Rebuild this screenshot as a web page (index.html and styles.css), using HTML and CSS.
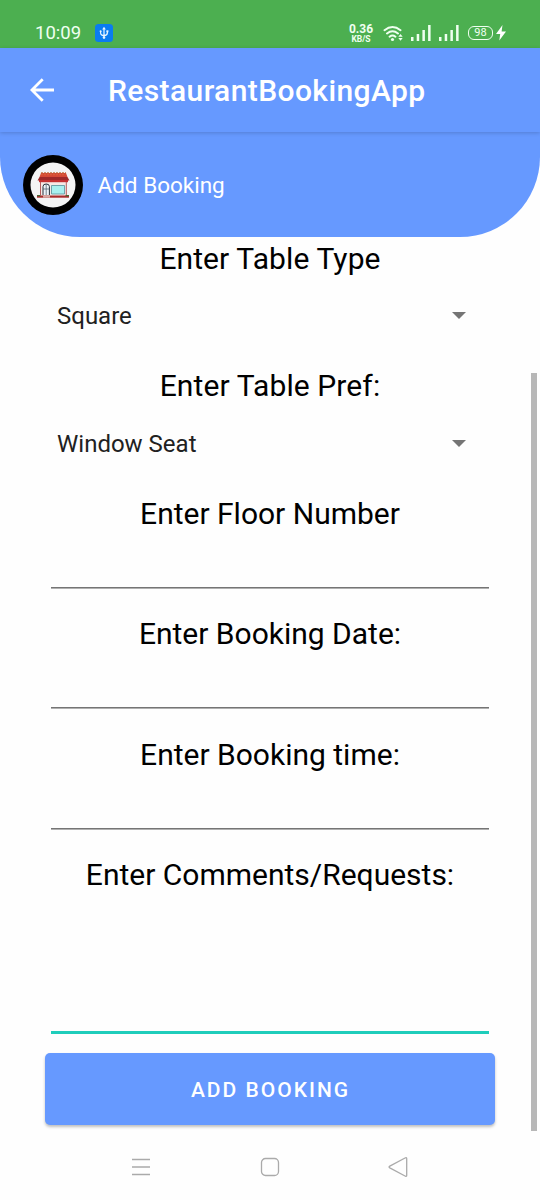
FILE: index.html
```html
<!DOCTYPE html>
<html lang="en">
<head>
<meta charset="utf-8">
<title>RestaurantBookingApp</title>
<link rel="stylesheet" href="styles.css">
</head>
<body>
<div class="screen">
  <div class="status">
    <span class="clock">10:09</span>
    <svg class="usb" width="18" height="18" viewBox="0 0 18 18">
      <rect width="18" height="18" rx="3.5" fill="#0a7cf0"/>
      <g fill="none" stroke="#e8f6ff" stroke-width="1.2"><path d="M9 4.5v10M5.6 7v1.8q0 2.6 3.4 2.9 3.4-.3 3.4-2.9V7"/></g>
      <path d="M9 2.8l1.8 2.6H7.2z" fill="#e8f6ff"/><circle cx="9" cy="13.5" r="1.3" fill="#e8f6ff"/><circle cx="5.6" cy="7.3" r="1" fill="#e8f6ff"/><path d="M11.4 6.3h2v2h-2z" fill="#e8f6ff"/>
    </svg>
    <div class="speed"><span class="rate">0.36</span><span class="unit">KB/S</span></div>
    <svg class="wifi" width="21" height="17" viewBox="0 0 21 17">
      <g fill="none" stroke="#effff0" stroke-width="2" stroke-linecap="round"><path d="M1.5 5.2q8-6.4 16 0M4 8.5q5.500-4.400 11 0M6.600 11.700q2.900-2.300 5.800 0"/></g>
      <circle cx="9.500" cy="14.500" r="1.600" fill="#effff0"/>
      <path d="M15.300 11.700l2.200-2.700 2.200 2.700zM15.300 13l2.200 2.700 2.200-2.700z" fill="#effff0"/>
    </svg>
    <svg class="signal" width="20" height="16" viewBox="0 0 20 16"><path d="M0 12h2.500v4H0zM5.700 9h2.500v7H5.700zM11.400 5h2.500v11h-2.500zM17.100 0h2.500v16h-2.500z" fill="#effff0"/></svg>
    <svg class="signal second" width="20" height="16" viewBox="0 0 20 16"><path d="M0 12h2.500v4H0zM5.700 9h2.500v7H5.700zM11.400 5h2.500v11h-2.500zM17.100 0h2.500v16h-2.500z" fill="#effff0"/></svg>
    <div class="battery">98</div>
    <svg class="bolt" width="10" height="16" viewBox="0 0 10 16"><path d="M6.500 0L0 9h4.200L3.300 15.500 10 6.500H5.600z" fill="#fff"/></svg>
  </div>
  <header class="appbar">
    <svg width="24" height="24" viewBox="0 0 24 24"><path d="M24 12H2M12.700 1.200L1.900 12l10.800 10.800" fill="none" stroke="#fff" stroke-width="2.800"/></svg>
    <h1 class="title">RestaurantBookingApp</h1>
  </header>
  <div class="banner-area">
    <div class="banner">
      <svg class="logo" width="60" height="60" viewBox="0 0 60 60">
        <circle cx="30" cy="30" r="30" fill="#000"/><circle cx="30" cy="30" r="22.500" fill="#f4f4f4"/>
        <path d="M17 25h27v16H17z" fill="#f6e9e6"/>
        <path d="M18 18h25l1.500 4H16.500z" fill="#d44936"/>
        <path d="M16.500 22h28l2 3.500h-32z" fill="#9e2929"/>
        <path d="M16 25h29v2.200H16z" fill="#c43030"/>
        <path d="M18 17.800h25" stroke="#b96b3a" stroke-width="1" stroke-dasharray="2 1"/>
        <path d="M18.500 19.700h24" stroke="#e8863f" stroke-width=".8" stroke-dasharray="1 2"/>
        <path d="M17.500 27v13M43.300 27v13" stroke="#b85c5c" stroke-width="1"/>
        <path d="M20 40V31.500q0-2.500 3.200-2.500t3.200 2.500V40" fill="#edf4f8" stroke="#26313b" stroke-width="1"/>
        <path d="M23.200 29v11M20 34h6.400" stroke="#485765" stroke-width=".7"/>
        <path d="M28.500 30.500h13V39h-13z" fill="#a8f0ef" stroke="#57919b" stroke-width=".8"/>
        <path d="M14 40.500h32v2.200H14z" fill="#aa2b2b"/>
        <path d="M20 40.300h7v2.400h-7z" fill="#d8a9a3"/>
        <path d="M14 40h3.500v1.300H14zM42.500 40H46v1.300h-3.500z" fill="#466b35"/>
      </svg>
      <span class="page-name">Add Booking</span>
    </div>
  </div>
  <main class="form">
    <section class="field choice"><h2 class="label">Enter Table Type</h2><div class="spinner"><span>Square</span><i class="caret"></i></div></section>
    <section class="field choice"><h2 class="label">Enter Table Pref:</h2><div class="spinner"><span>Window Seat</span><i class="caret"></i></div></section>
    <section class="field entry"><h2 class="label">Enter Floor Number</h2><div class="input"></div></section>
    <section class="field entry"><h2 class="label">Enter Booking Date:</h2><div class="input"></div></section>
    <section class="field entry"><h2 class="label">Enter Booking time:</h2><div class="input"></div></section>
    <section class="field comments"><h2 class="label">Enter Comments/Requests:</h2><div class="input focused"></div></section>
    <button class="submit">ADD BOOKING</button>
  </main>
  <nav class="navbar">
    <svg width="20" height="20" viewBox="0 0 20 20"><path d="M1 2.500h18M1 10h18M1 17.500h18"/></svg>
    <svg width="20" height="20" viewBox="0 0 20 20"><rect x="1.500" y="1.500" width="17" height="17" rx="4"/></svg>
    <svg width="20" height="20" viewBox="0 0 20 20"><path d="M17.500.8Q18.700.3 18.700 1.500v17q0 1.200-1.200.7L1.800 10.900q-1.500-.9 0-1.800z"/></svg>
  </nav>
  <div class="scrollbar"></div>
</div>
</body>
</html>
```
FILE: styles.css
```css
* { box-sizing: border-box; }
body { margin: 0; background: #fefefe; font-family: Roboto, "Liberation Sans", sans-serif; }
.screen { position: relative; width: 540px; height: 1200px; overflow: hidden; display: flex; flex-direction: column; }
svg { display: block; flex: none; }

.status { flex: none; height: 48px; padding: 18px 0 0 35px; background: #4caf50; display: flex; align-items: center; color: #effff0; }
.clock { width: 60px; font-size: 18.5px; line-height: 30px; }
.speed { margin-left: 235px; width: 26px; display: flex; flex-direction: column; align-items: center; font-weight: 700; }
.rate { font-size: 12px; line-height: 11px; }
.unit { font-size: 8.5px; line-height: 8px; }
.wifi { margin-left: 9px; }
.signal { margin-left: 7px; }
.second { margin-left: 8px; }
.battery { margin-left: 9px; width: 25px; height: 14px; border: 1.5px solid #effff0; border-radius: 6px; font-size: 11px; line-height: 12px; text-align: center; }
.bolt { margin-left: 3px; }

.appbar { position: relative; flex: none; height: 84px; padding: 0 30px; background: #6699ff; display: flex; align-items: center; gap: 54px; box-shadow: 0 1px 4px rgba(0, 0, 0, .18); }
.title { margin: 2px 0 0; font-size: 30px; line-height: 36px; font-weight: 500; letter-spacing: .4px; color: #fff; }
.banner-area { flex: none; height: 105px; }
.banner { height: 105px; padding: 0 22.5px; display: flex; align-items: center; gap: 15px; background: #6699ff; border-radius: 0 0 80px 80px; }
.page-name { font-size: 22.5px; line-height: 30px; color: #fff; margin-top: 1px; }

.form { flex: none; height: 888px; padding: 4px 45px 0; display: flex; flex-direction: column; }
.field { flex: none; display: flex; flex-direction: column; }
.choice { height: 128px; }
.choice:first-child { height: 127px; }
.entry { height: 120px; }
.entry:nth-child(4) { height: 121px; }
.comments { height: 196px; }
.label { margin: 0; font-size: 30px; line-height: 36px; font-weight: 400; text-align: center; color: #000; }
.choice .label { letter-spacing: .1px; }
.spinner { height: 77px; padding: 0 29px 0 12px; display: flex; align-items: center; justify-content: space-between; font-size: 24px; line-height: 30px; color: #212121; }
.choice + .choice .spinner { height: 79px; }
.spinner span { padding-top: 1px; }
.caret { border: 7.5px solid transparent; border-top-color: #757575; border-bottom: 0; }
.input { height: 57px; margin: 0 6px; padding-top: 55px; background: linear-gradient(#757575 50%, #b0b0b0 50%) bottom / 100% 2px no-repeat; }
.focused { height: 141px; border-bottom: 3px solid #1fcdbb; background: none; }
.submit { flex: none; height: 72px; padding: 2px 0 0 1px; border: 0; border-radius: 5px; background: #6699ff; color: #fff; font-family: inherit; font-size: 21px; font-weight: 500; letter-spacing: 2px; box-shadow: 0 2px 3px rgba(0, 0, 0, .25); }

.navbar { flex: none; height: 66px; margin-top: 8px; padding: 24px 132px 0 131px; display: flex; justify-content: space-between; }
.navbar svg { fill: none; stroke: #aaa; stroke-width: 1.3; }
.scrollbar { position: absolute; right: 3px; top: 373px; width: 6px; height: 758px; background: #b7b7b7; }
```
